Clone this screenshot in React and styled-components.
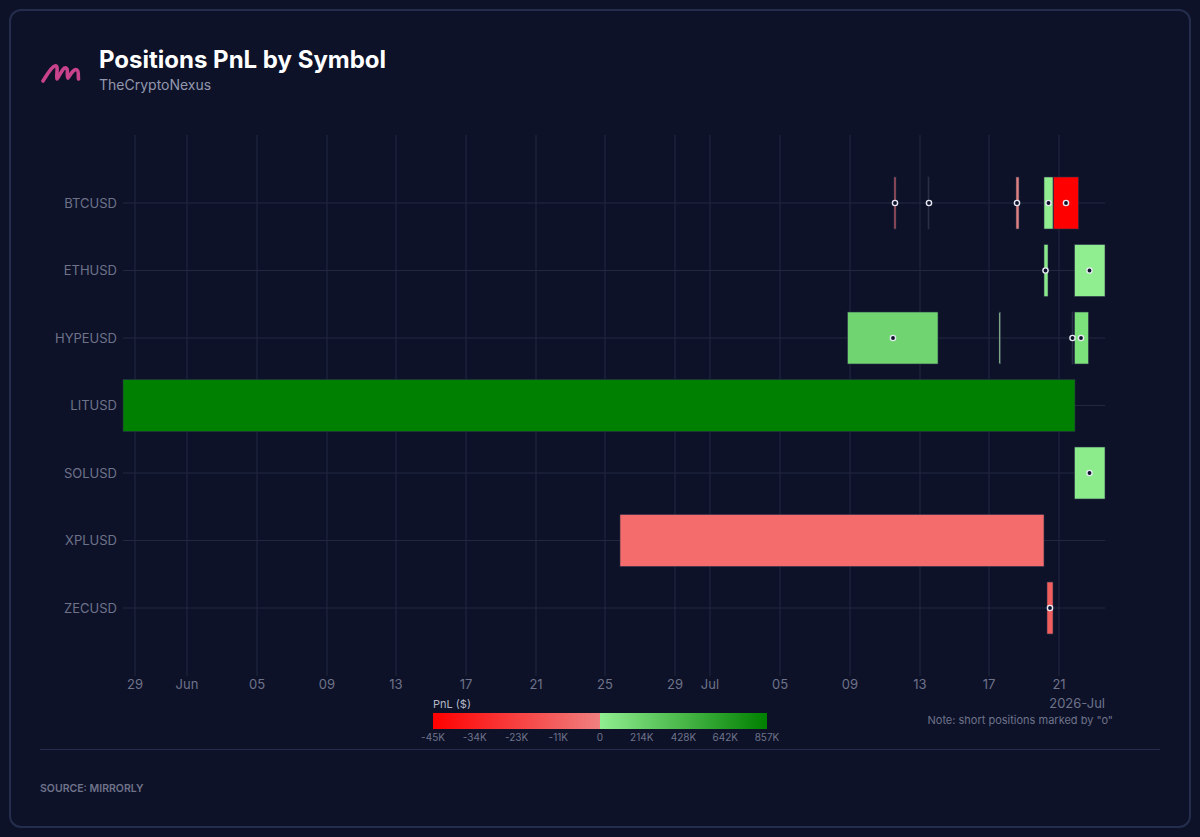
import styled, { createGlobalStyle } from "styled-components";

const GlobalStyle = createGlobalStyle`
  html, body {
    margin: 0;
    padding: 0;
    background: #0d1229;
    font-family: Inter, "Liberation Sans", sans-serif;
  }
`;

const Page = styled.div`
  width: 1200px;
  height: 837px;
  padding: 9px;
  box-sizing: border-box;
  background: #0d1229;
`;

const Card = styled.div`
  height: 100%;
  box-sizing: border-box;
  border: 2px solid #252d4c;
  border-radius: 12px;
  padding: 29px 29px 0;
`;

const Header = styled.header`
  display: flex;
  align-items: center;
  gap: 15px;
  height: 56px;
`;

const Logo = styled.svg`
  width: 44px;
  height: 24px;
  flex: none;
  margin-top: 6px;
`;

const Titles = styled.div`
  display: flex;
  flex-direction: column;
`;

const Title = styled.h1`
  margin: 0;
  font-size: 24px;
  line-height: 32px;
  font-weight: 700;
  color: #ffffff;
`;

const Subtitle = styled.div`
  font-size: 14px;
  line-height: 17px;
  color: #9497ad;
`;

const Plot = styled.svg`
  display: block;
  width: 1122px;
  height: 570px;
  margin-top: 30px;
`;

const BelowPlot = styled.div`
  display: flex;
  height: 54px;
  margin-top: -1px;
`;

const Legend = styled.div`
  width: 334px;
  margin-left: 393px;
  padding-top: 2px;
`;

const LegendTitle = styled.div`
  font-size: 11px;
  line-height: 14px;
  color: #b4b7c6;
`;

const LegendBar = styled.div`
  height: 16px;
  margin-top: 2px;
  background: linear-gradient(
    to right,
    #ff0000 0%,
    #f08080 50%,
    #90ee90 50%,
    #008000 100%
  );
`;

const LegendTicks = styled.div`
  display: flex;
  justify-content: space-between;
  margin-top: 1px;
`;

const LegendTick = styled.span`
  width: 0;
  display: flex;
  justify-content: center;
  white-space: nowrap;
  font-size: 10px;
  line-height: 14px;
  color: #6f7389;
`;

const AxisNote = styled.div`
  margin-left: auto;
  margin-right: 47px;
  display: flex;
  flex-direction: column;
  align-items: flex-end;
`;

const Month = styled.div`
  margin-right: 8px;
  font-size: 13px;
  line-height: 16px;
  color: #6f7389;
`;

const Note = styled.div`
  margin-top: 2px;
  font-size: 11px;
  line-height: 14px;
  color: #6f7389;
`;

const Divider = styled.hr`
  margin: 0 0 0 0;
  border: none;
  border-top: 1px solid #252d4c;
`;

const Source = styled.div`
  margin-top: 32px;
  font-size: 10.5px;
  line-height: 14px;
  font-weight: 600;
  color: #6f7389;
`;

const xTicks = [
  [135, "29"], [187, "Jun"], [257, "05"], [327, "09"], [396, "13"],
  [466, "17"], [536, "21"], [605, "25"], [675, "29"], [710, "Jul"],
  [780, "05"], [850, "09"], [920, "13"], [989, "17"], [1059, "21"],
];

const symbols = [
  ["BTCUSD", 202], ["ETHUSD", 269.5], ["HYPEUSD", 337], ["LITUSD", 404.5],
  ["SOLUSD", 472], ["XPLUSD", 539.5], ["ZECUSD", 607],
];

// x, width, row centre, colour
const bars = [
  [894, 2, 202, "#a8505c"],
  [928, 1, 202, "#2a3048"],
  [1016, 3, 202, "#e07f80"],
  [1044, 9, 202, "#90ee90"],
  [1053.5, 25, 202, "#ff0000"],
  [1044, 4, 269.5, "#8aea8a"],
  [1074.5, 30.5, 269.5, "#90ee90"],
  [847.5, 90.5, 337, "#70d570"],
  [999, 1.5, 337, "#9fd8a0"],
  [1072, 1, 337, "#2a3048"],
  [1074.5, 14, 337, "#7ce27c"],
  [123, 952, 404.5, "#008000"],
  [1074.5, 30.5, 472, "#8cec8c"],
  [620, 424, 539.5, "#f56c6c"],
  [1047, 6, 607, "#f15e5e"],
];

const shorts = [
  [895, 202], [929, 202], [1017, 202], [1048.5, 202], [1066, 202],
  [1045.5, 269.5], [1089.5, 269.5],
  [893, 337], [1072.5, 337], [1081, 337],
  [1089.5, 472],
  [1050, 607],
];

const legendTicks = ["-45K", "-34K", "-23K", "-11K", "0", "214K", "428K", "642K", "857K"];

function App() {
  return (
    <Page>
      <GlobalStyle />
      <Card>
        <Header>
          <Logo viewBox="40 48 44 24">
            <path
              d="M43 70 C47 64 51 56 55 55 C59 54 56 63 57 68 C60 64 63 56 66 57 C69 58 66 64 68 67 C71 63 74 57 77 59 C79 60 78 65 78.5 68"
              fill="none"
              stroke="#c8428c"
              strokeWidth="3.6"
              strokeLinecap="round"
              strokeLinejoin="round"
            />
          </Logo>
          <Titles>
            <Title>Positions PnL by Symbol</Title>
            <Subtitle>TheCryptoNexus</Subtitle>
          </Titles>
        </Header>

        <Plot viewBox="40 125 1122 570">
          {xTicks.map(([x]) => (
            <line key={x} x1={x} x2={x} y1="134" y2="675" stroke="#212840" strokeWidth="1" />
          ))}
          {symbols.map(([name, y]) => (
            <line key={name} x1="123" x2="1105" y1={y} y2={y} stroke="#212840" strokeWidth="1" />
          ))}
          {bars.map(([x, w, y, color], i) => (
            <rect
              key={i}
              x={x}
              y={y - 26}
              width={w}
              height="52"
              fill={color}
              stroke="#2a3048"
              strokeWidth="0.6"
            />
          ))}
          {shorts.map(([x, y], i) => (
            <circle key={i} cx={x} cy={y} r="2.6" fill="#0d1229" stroke="#e8e8f4" strokeWidth="1.4" />
          ))}
          {symbols.map(([name, y]) => (
            <text
              key={name}
              x="117"
              y={y + 4.5}
              textAnchor="end"
              fontFamily="Inter, sans-serif"
              fontSize="13"
              fill="#6f7389"
            >
              {name}
            </text>
          ))}
          {xTicks.map(([x, label]) => (
            <text
              key={x}
              x={x}
              y="688"
              textAnchor="middle"
              fontFamily="Inter, sans-serif"
              fontSize="13"
              fill="#6f7389"
            >
              {label}
            </text>
          ))}
        </Plot>

        <BelowPlot>
          <Legend>
            <LegendTitle>PnL ($)</LegendTitle>
            <LegendBar />
            <LegendTicks>
              {legendTicks.map((t) => (
                <LegendTick key={t}>{t}</LegendTick>
              ))}
            </LegendTicks>
          </Legend>
          <AxisNote>
            <Month>2026-Jul</Month>
            <Note>Note: short positions marked by "o"</Note>
          </AxisNote>
        </BelowPlot>

        <Divider />
        <Source>SOURCE: MIRRORLY</Source>
      </Card>
    </Page>
  );
}

export default App;
